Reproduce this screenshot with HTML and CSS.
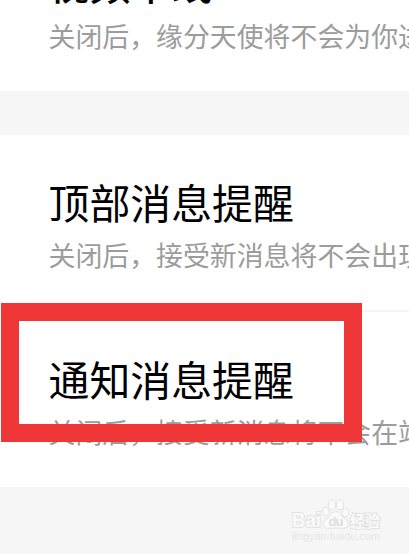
FILE: index.html
```html
<!DOCTYPE html>
<html lang="zh-CN">
<head>
    <meta charset="UTF-8">
    <meta name="viewport" content="width=device-width, initial-scale=1.0">
    <title>消息提醒</title>
    <link rel="stylesheet" href="styles.css">
</head>
<body>
    <section class="group group-first">
        <div class="item">
            <h2 class="title title-bold">视频牵线</h2>
            <p class="desc">关闭后，缘分天使将不会为你进</p>
        </div>
    </section>

    <section class="group group-messages">
        <div class="item">
            <h2 class="title">顶部消息提醒</h2>
            <p class="desc">关闭后，接受新消息将不会出现</p>
        </div>
        <div class="item item-notify">
            <h2 class="title">通知消息提醒</h2>
            <p class="desc">关闭后，接受新消息将不会在站</p>
            <div class="highlight"></div>
        </div>
    </section>

    <footer class="watermark">
        <svg width="94" height="48" viewBox="0 0 94 48">
            <g class="mark">
                <text class="mark-brand" x="2" y="31" textLength="29" lengthAdjust="spacingAndGlyphs">Bai</text>
                <ellipse cx="35.5" cy="15.5" rx="2.8" ry="3.8"/>
                <ellipse cx="42" cy="9" rx="3.2" ry="4.4"/>
                <ellipse cx="50" cy="9" rx="3.2" ry="4.4"/>
                <ellipse cx="55.5" cy="16.500" rx="2.8" ry="3.8"/>
                <path d="M46 16c-4 0-5 3.500-8 6s-5.500 4-4 7.500 6 2 12 2 10 1.500 11.500-2-1-5-4-7.500-3.500-6-7.500-6z"/>
                <text class="mark-cn" x="60" y="31" textLength="30" lengthAdjust="spacingAndGlyphs">经验</text>
            </g>
            <text class="mark-du" x="38.500" y="30" textLength="15">du</text>
            <text class="mark-url" x="2" y="44" textLength="88">jingyan.baidu.com</text>
        </svg>
    </footer>
</body>
</html>
```

FILE: styles.css
```css
* {
    box-sizing: border-box;
}
body {
    margin: 0;
    height: 554px;
    overflow: hidden;
    background: #f6f6f6;
    font-family: "Noto Sans CJK SC", sans-serif;
}
.group {
    background: #fff;
    overflow: hidden;
}
.group-first {
    height: 91px;
    margin-bottom: 44px;
}
.group-first .item {
    margin-top: -38px;
    padding-top: 0;
}
.group-messages {
    height: 352px;
}
.item {
    padding: 46px 0 0 48.5px;
    white-space: nowrap;
}
.item-notify {
    position: relative;
    margin-top: 42px;
    border-top: 2px solid #f6f6f6;
}
.title {
    margin: 0;
    font-size: 40.9px;
    line-height: 41px;
    font-weight: 400;
    color: #000;
}
.title-bold {
    font-weight: 500;
}
.desc {
    margin: 19px 0 0;
    font-size: 26.9px;
    line-height: 27px;
    font-weight: 400;
    color: #9c9c9c;
}
/* red frame round the notification row */
.highlight {
    position: absolute;
    left: 1px;
    top: -9px;
    width: 361px;
    height: 139px;
    border: 18px solid #f03737;
}
.watermark {
    display: flex;
    justify-content: flex-end;
    padding: 9px 25px 0 0;
}
.mark {
    fill: #fafafa;
    stroke: #e2e2e2;
    stroke-width: 2;
    paint-order: stroke;
}
.mark-brand {
    font: bold 20px "Liberation Sans", sans-serif;
}
.mark-cn {
    font-size: 16px;
    font-weight: 700;
}
.mark-du {
    font: bold 13px "Liberation Sans", sans-serif;
    fill: #dedede;
}
.mark-url {
    font: 11px "Liberation Sans", sans-serif;
    fill: #e6e6e6;
}
```
